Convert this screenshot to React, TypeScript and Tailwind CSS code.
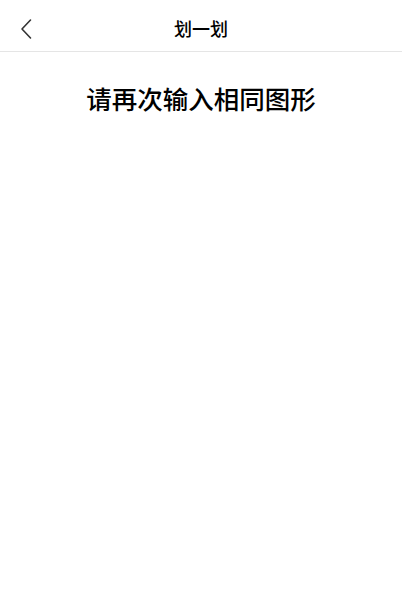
export default function App() {
  return (
    <div
      className="flex h-[601px] w-full flex-col bg-white text-black"
      style={{ fontFamily: '"Noto Sans", "Noto Sans CJK SC", sans-serif' }}
    >
      <div className="relative flex h-[52px] items-center justify-center border-b border-[#e5e5e5] pt-[6px]">
        <button className="absolute left-[14px] top-[16px] flex h-[26px] w-[24px] items-center justify-center">
          <svg width="14" height="22" viewBox="0 0 14 22" fill="none">
            <path d="M11.5 2 L3 11 L11.5 20" stroke="#333" strokeWidth="1.6" strokeLinecap="round" strokeLinejoin="round" />
          </svg>
        </button>
        <h1 className="text-[18px] font-medium leading-none">划一划</h1>
      </div>
      <div className="flex justify-center pt-[35px]">
        <p className="text-[25.5px] font-medium leading-none">请再次输入相同图形</p>
      </div>
    </div>
  );
}
